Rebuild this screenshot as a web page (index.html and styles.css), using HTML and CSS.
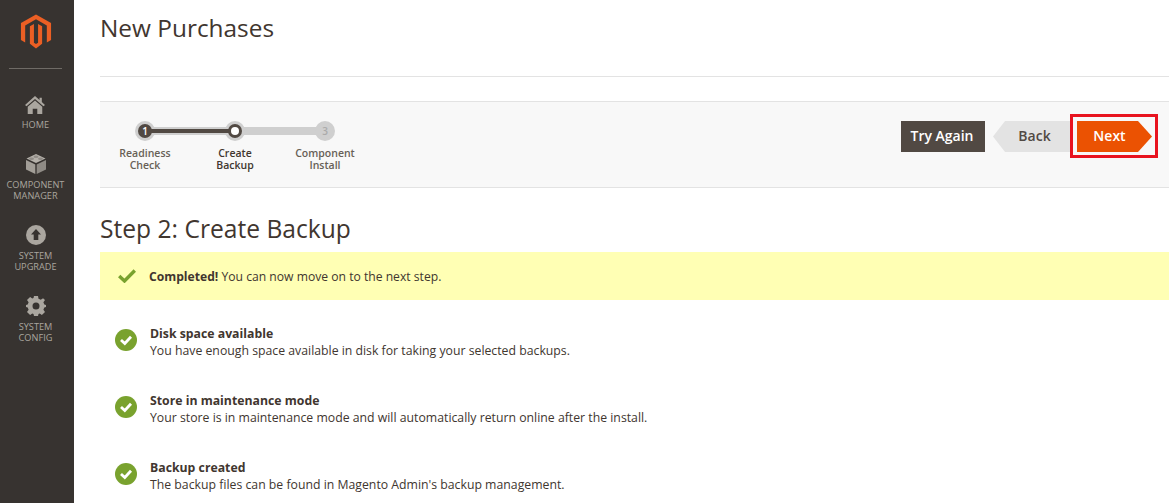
FILE: index.html
```html
<!DOCTYPE html>
<html lang="en">
<head>
<meta charset="utf-8">
<title>New Purchases</title>
<link rel="stylesheet" href="styles.css">
</head>
<body>
<div class="app">
  <nav class="sidebar">
    <div class="logo-box">
      <svg class="logo" width="32" height="35" viewBox="0 0 34 36"><path fill="#eb5f24" d="M17 0 L33 9 V27 L28.500 29.600 V11.700 L17 5 L5.500 11.700 V29.600 L1 27 V9 Z"/><path fill="#eb5f24" d="M14.800 10 V30 L17 31.300 L19.200 30 V10 L23.500 12.300 V31 L17 36 L10.500 31 V12.300 Z"/></svg>
    </div>
    <div class="nav-item nav-home">
      <svg width="20" height="20" viewBox="0 0 22 20"><path fill="#aaa69f" d="M11 0 L16 4.500 V2 H18.500 V6.800 L22 10 L20.300 11.500 L11 3.300 L1.700 11.500 L0 10 Z"/><path fill="#aaa69f" d="M11 5 L19 12 V20 H13.500 V14 H8.500 V20 H3 V12 Z"/></svg>
      <span>HOME</span>
    </div>
    <div class="nav-item nav-comp">
      <svg width="20" height="20" viewBox="0 0 20 20"><path fill="#b5b1aa" d="M10 0 L19.500 4.500 L10 9 L0.500 4.500 Z"/><path fill="#a29e97" d="M0 6 L9.300 10.400 V20 L0 15.500 Z"/><path fill="#8f8b85" d="M20 6 L10.700 10.400 V20 L20 15.500 Z"/><ellipse cx="10" cy="2.800" rx="2.500" ry="1.200" fill="#8f8b85"/><ellipse cx="5.500" cy="4.800" rx="2.500" ry="1.200" fill="#8f8b85"/><ellipse cx="14.500" cy="4.800" rx="2.500" ry="1.200" fill="#8f8b85"/></svg>
      <span>COMPONENT<br>MANAGER</span>
    </div>
    <div class="nav-item nav-up">
      <svg width="20" height="20" viewBox="0 0 20 20"><circle cx="10" cy="10" r="10" fill="#aaa69f"/><path fill="#373330" d="M10 4 L15 9.500 H12.300 V15 H7.700 V9.500 H5 Z"/></svg>
      <span>SYSTEM<br>UPGRADE</span>
    </div>
    <div class="nav-item nav-conf">
      <svg width="20" height="20" viewBox="0 0 20 20"><path fill="#aaa69f" fill-rule="evenodd" d="M8 0 H12 L12.500 2.800 L14.800 3.800 L17.100 2.200 L17.800 2.900 L19 4.100 L17.400 6.300 L18.300 8.500 L20 8.900 V11.100 L18.300 11.500 L17.400 13.700 L19 15.900 L15.900 19 L13.700 17.400 L12.500 18 L12 20 H8 L7.500 18 L6.300 17.400 L4.100 19 L1 15.900 L2.600 13.700 L1.700 11.500 L0 11.100 V8.900 L1.700 8.500 L2.600 6.300 L1 4.100 L4.100 1 L6.300 2.600 L7.500 2 Z M10 6.500 A3.500 3.500 0 1 0 10 13.500 A3.500 3.500 0 1 0 10 6.500 Z"/></svg>
      <span>SYSTEM<br>CONFIG</span>
    </div>
  </nav>
  <main class="content">
    <header class="page-head"><h1>New Purchases</h1></header>
    <section class="wizard">
      <ol class="steps">
        <li class="step done"><span class="dot"><span class="num">1</span></span><span class="label">Readiness<br>Check</span></li>
        <li class="step current"><span class="dot"></span><span class="label">Create<br>Backup</span></li>
        <li class="step todo"><span class="dot"><span class="num">3</span></span><span class="label">Component<br>Install</span></li>
      </ol>
      <div class="actions">
        <button class="btn btn-retry">Try Again</button>
        <button class="btn btn-back">Back</button>
        <span class="highlight"><button class="btn btn-next">Next</button></span>
      </div>
    </section>
    <h2>Step 2: Create Backup</h2>
    <div class="notice">
      <svg width="18" height="14" viewBox="0 0 18 14"><path fill="none" stroke="#79a22e" stroke-width="3.400" d="M1.200 7 L6.500 12 L16.800 1.500"/></svg>
      <p><strong>Completed!</strong> You can now move on to the next step.</p>
    </div>
    <ul class="checks">
      <li class="check"><svg class="tick" width="22" height="22" viewBox="0 0 22 22"><circle cx="11" cy="11" r="11" fill="#79a22e"/><path fill="none" stroke="#fff" stroke-width="2.800" d="M6 11 L9.800 14.500 L16 7.800"/></svg><div><strong>Disk space available</strong><br>You have enough space available in disk for taking your selected backups.</div></li>
      <li class="check"><svg class="tick" width="22" height="22" viewBox="0 0 22 22"><circle cx="11" cy="11" r="11" fill="#79a22e"/><path fill="none" stroke="#fff" stroke-width="2.800" d="M6 11 L9.800 14.500 L16 7.800"/></svg><div><strong>Store in maintenance mode</strong><br>Your store is in maintenance mode and will automatically return online after the install.</div></li>
      <li class="check"><svg class="tick" width="22" height="22" viewBox="0 0 22 22"><circle cx="11" cy="11" r="11" fill="#79a22e"/><path fill="none" stroke="#fff" stroke-width="2.800" d="M6 11 L9.800 14.500 L16 7.800"/></svg><div><strong>Backup created</strong><br>The backup files can be found in Magento Admin's backup management.</div></li>
    </ul>
  </main>
</div>
</body>
</html>
```
FILE: styles.css
```css
* { box-sizing: border-box; }
html, body { margin: 0; padding: 0; height: 100%; overflow: hidden; background: #fff; }
body { font-family: "Open Sans", sans-serif; color: #41362f; font-size: 12.28px; }
.app { display: flex; height: 503px; overflow: hidden; }
.sidebar { width: 74px; flex: none; background: #373330; display: flex; flex-direction: column; align-items: center; color: #aaa69f; padding-right: 3px; }
.logo-box { width: 53px; height: 69px; padding-top: 14px; border-bottom: 1px solid #6f6b66; display: flex; justify-content: center; align-items: flex-start; margin-bottom: 26px; }
.logo { display: block; }
.nav-item { display: flex; flex-direction: column; align-items: center; text-align: center; font-size: 9.2px; line-height: 11px; white-space: nowrap; }
.nav-item svg { display: block; margin-bottom: 5px; }
.nav-home svg { margin-bottom: 4px; }
.nav-comp { margin-top: 24px; }
.nav-up { margin-top: 24px; }
.nav-conf { margin-top: 24px; }
.content { flex: 1; min-width: 0; padding: 0 6px 0 26px; }
.page-head { height: 77px; border-bottom: 1px solid #e3e3e3; padding-top: 11px; margin-bottom: 24px; }
h1 { margin: 0; font-size: 24.4px; line-height: 33px; font-weight: 400; }
.wizard { height: 87px; background: #f8f8f8; border-top: 1px solid #e3e3e3; border-bottom: 1px solid #e3e3e3; display: flex; justify-content: space-between; }
.steps { list-style: none; margin: 0; padding: 19px 0 0 0; display: flex; }
.step { width: 90px; position: relative; display: flex; flex-direction: column; align-items: center; font-size: 10.5px; line-height: 12px; text-align: center; color: #676056; font-weight: 600; }
.step::before { content: ""; position: absolute; top: 6px; left: 45px; width: 90px; height: 8px; background: #cfcfcf; }
.step.todo::before { display: none; }
.step.done::after { content: ""; position: absolute; z-index: 1; top: 8px; left: 45px; width: 90px; height: 4px; background: #514943; }
.dot { position: relative; width: 20px; height: 20px; border-radius: 50%; background: #cfcfcf; margin-bottom: 6px; font-size: 10px; line-height: 20px; color: #aaa; font-weight: 600; }
.num { position: relative; z-index: 2; }
.done .dot { color: #fff; }
.done .dot::before, .current .dot::before { content: ""; position: absolute; inset: 3px; border-radius: 50%; background: #514943; }
.current .dot::before { z-index: 2; }
.current .dot::after { content: ""; position: absolute; z-index: 3; inset: 6px; border-radius: 50%; background: #fff; }
.current .label { color: #41362f; }
.actions { display: flex; align-items: flex-start; padding: 19px 0 0 0; margin-right: 11px; }
.btn { border: 0; padding: 0 0 2px; font-family: inherit; font-size: 14px; font-weight: 600; height: 31px; line-height: 29px; display: block; }
.btn-retry { width: 84px; background: #514943; color: #fff; margin-right: 8px; padding-right: 2px; }
.btn-back { width: 77px; background: #e3e3e3; color: #514943; clip-path: polygon(12px 0, 100% 0, 100% 100%, 12px 100%, 0 50%); padding-left: 6px; }
.highlight { display: block; margin-top: -7px; padding: 4px 3px 4px 4px; border: 3px solid #e8131f; height: 44px; width: 88px; }
.btn-next { width: 75px; background: #eb5202; color: #fff; clip-path: polygon(0 0, 61px 0, 100% 50%, 61px 100%, 0 100%); padding-right: 10px; }
h2 { margin: 24px 0 7px; font-size: 24.6px; line-height: 33px; font-weight: 400; }
.notice { height: 48px; background: #ffffb4; display: flex; align-items: center; padding-left: 18px; gap: 13px; font-size: 12.15px; }
.notice p { margin: 0; }
.notice svg { flex: none; }
.checks { list-style: none; margin: 0; padding: 25px 0 0 15px; }
.check { display: flex; height: 67px; line-height: 17px; gap: 13px; }
.tick { flex: none; margin-top: 4px; }
strong { font-weight: 700; }
```
